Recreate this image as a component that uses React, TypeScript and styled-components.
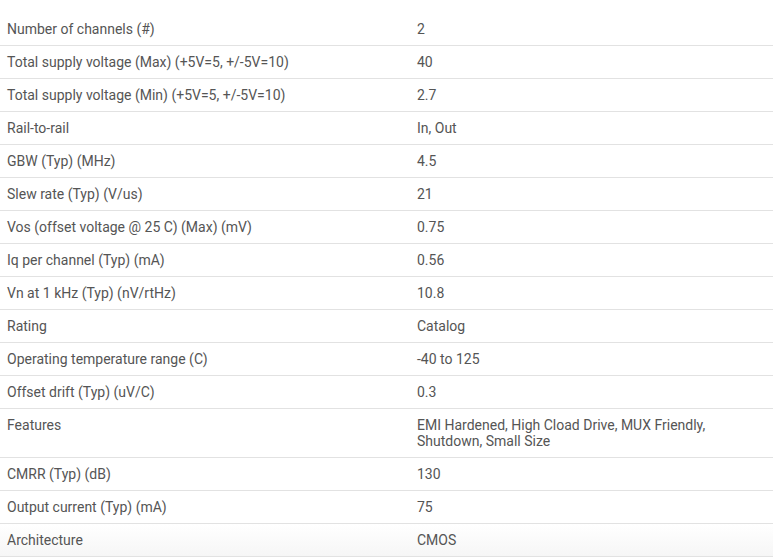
import React from "react";
import styled, { createGlobalStyle } from "styled-components";

const Global = createGlobalStyle`
  html, body { margin: 0; padding: 0; background: #ffffff; }
  body { font-family: Roboto, "Liberation Sans", Arial, sans-serif; }
`;

const Table = styled.div`
  padding-top: 13px;
  width: 773px;
  display: flex;
  flex-direction: column;
`;

const Row = styled.div<{ $fade?: boolean }>`
  display: grid;
  grid-template-columns: 410px 1fr;
  border-bottom: 1px solid #e2e2e2;
  background: ${(p) => (p.$fade ? "linear-gradient(to bottom, #ffffff 0%, #f6f6f6 100%)" : "#ffffff")};
`;

const Cell = styled.div`
  padding: 8px 40px 8px 7px;
  font-size: 14px;
  line-height: 16px;
  color: #555555;
`;

const rows: [string, string][] = [
  ["Number of channels (#)", "2"],
  ["Total supply voltage (Max) (+5V=5, +/-5V=10)", "40"],
  ["Total supply voltage (Min) (+5V=5, +/-5V=10)", "2.7"],
  ["Rail-to-rail", "In, Out"],
  ["GBW (Typ) (MHz)", "4.5"],
  ["Slew rate (Typ) (V/us)", "21"],
  ["Vos (offset voltage @ 25 C) (Max) (mV)", "0.75"],
  ["Iq per channel (Typ) (mA)", "0.56"],
  ["Vn at 1 kHz (Typ) (nV/rtHz)", "10.8"],
  ["Rating", "Catalog"],
  ["Operating temperature range (C)", "-40 to 125"],
  ["Offset drift (Typ) (uV/C)", "0.3"],
  ["Features", "EMI Hardened, High Cload Drive, MUX Friendly, Shutdown, Small Size"],
  ["CMRR (Typ) (dB)", "130"],
  ["Output current (Typ) (mA)", "75"],
  ["Architecture", "CMOS"],
];

export default function App() {
  return (
    <>
      <Global />
      <Table>
        {rows.map(([k, v], i) => (
          <Row key={k} $fade={i === rows.length - 1}>
            <Cell>{k}</Cell>
            <Cell>{v}</Cell>
          </Row>
        ))}
      </Table>
    </>
  );
}
